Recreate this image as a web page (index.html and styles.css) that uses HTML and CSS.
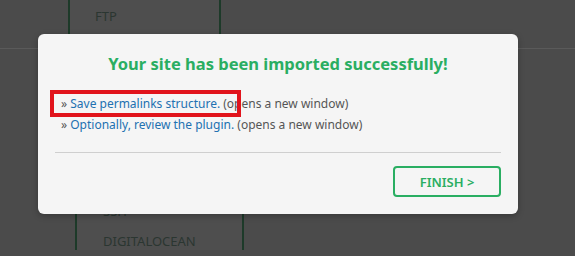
FILE: index.html
```html
<!DOCTYPE html>
<html lang="en">
<head>
  <meta charset="UTF-8">
  <meta name="viewport" content="width=device-width, initial-scale=1.0">
  <title>Import finished</title>
  <link rel="stylesheet" href="styles.css">
</head>
<body>
  <div class="page">
    <div class="row row-top">
      <div class="cell cell-top"><span class="cell-label">FTP</span></div>
    </div>
    <div class="rule"></div>
    <div class="spacer"></div>
    <div class="row row-bottom">
      <div class="cell cell-bottom">
        <span class="cell-label cell-cut">SSH</span>
        <span class="cell-label">DIGITALOCEAN</span>
      </div>
    </div>
  </div>

  <div class="modal">
    <h2 class="modal-title">Your site has been imported successfully!</h2>
    <ul class="next-steps">
      <li class="step">
        <span class="mark">&raquo; <a href="#">Save permalinks structure.</a></span> (opens a new window)
      </li>
      <li class="step">
        &raquo; <a href="#">Optionally, review the plugin.</a> (opens a new window)
      </li>
    </ul>
    <hr class="divider">
    <div class="actions">
      <button class="finish">FINISH &gt;</button>
    </div>
  </div>
</body>
</html>
```

FILE: styles.css
```css
body {
  margin: 0;
  background: #4b4b4b;
  font-family: "Noto Sans", "Open Sans", sans-serif;
  overflow: hidden;
  height: 256px;
}
.page { position: relative; }
.row { display: flex; }
.row-top { height: 48px; }
.cell {
  border-left: 2px solid #1d3a29;
  border-right: 2px solid #1d3a29;
  background: #4e4e4e;
  box-sizing: border-box;
}
.cell-top {
  margin-left: 68px;
  width: 153px;
  padding: 7px 0 0 25px;
}
.cell-bottom {
  margin-left: 75px;
  width: 169px;
  height: 54px;
  padding: 0 0 0 26px;
  display: flex;
  flex-direction: column;
  justify-content: flex-end;
  gap: 12px;
}
.cell-label {
  color: #2b3631;
  font-size: 13px;
  display: block;
}
.cell-cut { margin-top: -8px; }
.rule {
  height: 1px;
  background: #5a5a5a;
}
.spacer { height: 147px; }

.modal {
  position: absolute;
  left: 38px;
  top: 34px;
  width: 480px;
  height: 180px;
  box-sizing: border-box;
  background: #f5f5f5;
  border-radius: 6px;
  padding: 16px 17px 0 17px;
  box-shadow: 0 2px 6px rgba(0, 0, 0, 0.25);
}
.modal-title {
  margin: 0;
  text-align: center;
  color: #2aae62;
  font-size: 16.5px;
  font-weight: 700;
  line-height: 28px;
}
.next-steps {
  list-style: none;
  margin: 15px 0 0 0;
  padding: 0 0 0 6px;
  font-size: 12px;
  color: #555;
}
.step { line-height: 21px; }
.step a { color: #2271b1; text-decoration: none; }
.mark { position: relative; }
.mark::after {
  content: "";
  position: absolute;
  left: -11px;
  width: 191px;
  top: -5px;
  bottom: -5px;
  box-sizing: border-box;
  border: 4px solid #e1141c;
  z-index: 1;
}
.divider {
  border: 0;
  border-top: 1px solid #cfcfcf;
  margin: 17px 0 0 0;
}
.actions {
  display: flex;
  justify-content: flex-end;
  margin-top: 13px;
}
.finish {
  width: 108px;
  height: 31px;
  background: transparent;
  border: 2px solid #2aae62;
  border-radius: 4px;
  color: #2aae62;
  font-family: inherit;
  font-size: 13px;
  font-weight: 600;
}
```
